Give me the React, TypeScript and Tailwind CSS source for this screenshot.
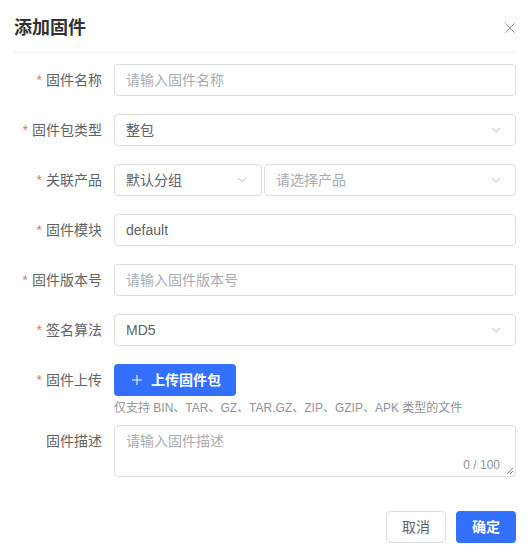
import { ChevronDown, Plus, X } from "lucide-react";

const font = {
  fontFamily: '"Liberation Sans", "Noto Sans CJK SC", sans-serif',
};

function Label({ text, required = true }: { text: string; required?: boolean }) {
  return (
    <div className="flex h-8 w-[100px] shrink-0 items-center justify-end pr-3 text-sm text-[#606266]">
      {required && <span className="mr-1 text-[#f56c6c]">*</span>}
      {text}
    </div>
  );
}

function TextInput({ value, placeholder }: { value?: string; placeholder?: string }) {
  return (
    <div className="flex h-8 flex-1 items-center rounded border border-[#dcdfe6] px-[11px] text-sm">
      {value ? (
        <span className="text-[#606266]">{value}</span>
      ) : (
        <span className="text-[#a8abb2]">{placeholder}</span>
      )}
    </div>
  );
}

function SelectBox({
  value,
  placeholder,
  className = "flex-1",
}: {
  value?: string;
  placeholder?: string;
  className?: string;
}) {
  return (
    <div
      className={`flex h-8 items-center justify-between rounded border border-[#dcdfe6] pl-[11px] pr-3 text-sm ${className}`}
    >
      {value ? (
        <span className="text-[#606266]">{value}</span>
      ) : (
        <span className="text-[#a8abb2]">{placeholder}</span>
      )}
      <ChevronDown className="h-[14px] w-[14px] text-[#a8abb2]" strokeWidth={1.5} />
    </div>
  );
}

export default function App() {
  return (
    <div className="min-h-[555px] bg-white pl-[14px] pr-3" style={font}>
      <div className="flex h-[53px] items-center justify-between border-b border-[#ebeef5] pt-1">
        <h2 className="text-[18px] font-bold text-[#303133]">添加固件</h2>
        <X className="-mr-[3px] h-[18px] w-[18px] text-[#909399]" strokeWidth={1.3} />
      </div>

      <div className="flex flex-col pt-[11px]">
        <div className="mb-[18px] flex">
          <Label text="固件名称" />
          <TextInput placeholder="请输入固件名称" />
        </div>
        <div className="mb-[18px] flex">
          <Label text="固件包类型" />
          <SelectBox value="整包" />
        </div>
        <div className="mb-[18px] flex">
          <Label text="关联产品" />
          <div className="flex flex-1 gap-[2px]">
            <SelectBox value="默认分组" className="w-[148px]" />
            <SelectBox placeholder="请选择产品" className="flex-1" />
          </div>
        </div>
        <div className="mb-[18px] flex">
          <Label text="固件模块" />
          <TextInput value="default" />
        </div>
        <div className="mb-[18px] flex">
          <Label text="固件版本号" />
          <TextInput placeholder="请输入固件版本号" />
        </div>
        <div className="mb-[18px] flex">
          <Label text="签名算法" />
          <SelectBox value="MD5" />
        </div>
        <div className="mb-[7px] flex">
          <Label text="固件上传" />
          <div className="flex flex-col items-start">
            <button className="flex h-8 w-[122px] items-center justify-center gap-[6px] rounded bg-[#3370ff] text-sm font-bold text-white">
              <Plus className="h-4 w-4" strokeWidth={1.5} />
              上传固件包
            </button>
            <div className="mt-[2px] text-xs leading-5 text-[#909399]">
              仅支持 BIN、TAR、GZ、TAR.GZ、ZIP、GZIP、APK 类型的文件
            </div>
          </div>
        </div>
        <div className="flex">
          <Label text="固件描述" required={false} />
          <div className="relative h-[52px] flex-1 rounded border border-[#dcdfe6] px-[11px] py-[5px] text-sm">
            <span className="text-[#a8abb2]">请输入固件描述</span>
            <span className="absolute bottom-[3px] right-[15px] text-xs text-[#909399]">0 / 100</span>
            <svg
              className="absolute bottom-px right-px"
              width="8"
              height="8"
              viewBox="0 0 8 8"
            >
              <path d="M7 1L1 7M7 4L4 7" stroke="#606266" strokeWidth="0.8" />
            </svg>
          </div>
        </div>
      </div>

      <div className="mt-[34px] flex justify-end gap-[10px]">
        <button className="h-8 w-[60px] rounded border border-[#dcdfe6] bg-white text-sm text-[#606266]">
          取消
        </button>
        <button className="h-8 w-[60px] rounded bg-[#3370ff] text-sm font-bold text-white">
          确定
        </button>
      </div>
    </div>
  );
}
